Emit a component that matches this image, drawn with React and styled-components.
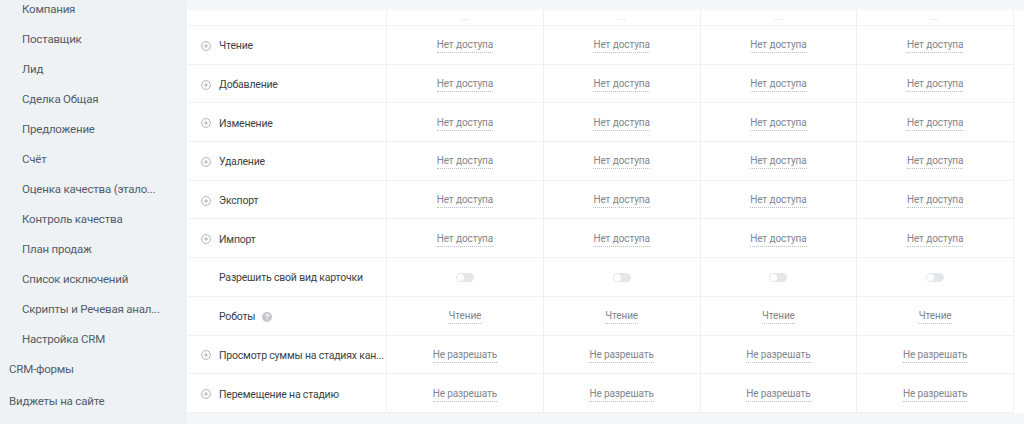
import React from 'react';
import styled, { createGlobalStyle } from 'styled-components';

const GlobalStyle = createGlobalStyle`
  html, body {
    margin: 0;
    padding: 0;
    background: #fff;
    font-family: Roboto, "Open Sans", "Liberation Sans", sans-serif;
  }
  #root {
    height: 424px;
    overflow: hidden;
  }
`;

const menu = [
  { name: 'Компания', sub: true },
  { name: 'Поставщик', sub: true },
  { name: 'Лид', sub: true },
  { name: 'Сделка Общая', sub: true },
  { name: 'Предложение', sub: true },
  { name: 'Счёт', sub: true },
  { name: 'Оценка качества (этало...', sub: true },
  { name: 'Контроль качества', sub: true },
  { name: 'План продаж', sub: true },
  { name: 'Список исключений', sub: true },
  { name: 'Скрипты и Речевая анал...', sub: true },
  { name: 'Настройка CRM', sub: true },
  { name: 'CRM-формы', sub: false },
  { name: 'Виджеты на сайте', sub: false, last: true },
];

const rows = [
  { label: 'Чтение', plus: true, kind: 'link', value: 'Нет доступа' },
  { label: 'Добавление', plus: true, kind: 'link', value: 'Нет доступа' },
  { label: 'Изменение', plus: true, kind: 'link', value: 'Нет доступа' },
  { label: 'Удаление', plus: true, kind: 'link', value: 'Нет доступа' },
  { label: 'Экспорт', plus: true, kind: 'link', value: 'Нет доступа' },
  { label: 'Импорт', plus: true, kind: 'link', value: 'Нет доступа' },
  { label: 'Разрешить свой вид карточки', plus: false, kind: 'toggle' },
  { label: 'Роботы', plus: false, kind: 'link', value: 'Чтение', help: true },
  { label: 'Просмотр суммы на стадиях кан...', plus: true, kind: 'link', value: 'Не разрешать' },
  { label: 'Перемещение на стадию', plus: true, kind: 'link', value: 'Не разрешать' },
];

const Page = styled.div`
  display: flex;
  height: 424px;
`;

const Sidebar = styled.nav`
  width: 187px;
  flex-shrink: 0;
  background: #eef2f4;
  display: flex;
  flex-direction: column;
  padding-top: 1px;
`;

const MenuItem = styled.div`
  height: 30px;
  line-height: 16px;
  padding-left: ${({ sub }) => (sub ? '22px' : '9px')};
  margin-top: ${({ last }) => (last ? '2px' : '0')};
  font-size: 11.5px;
  letter-spacing: -0.2px;
  color: #535c69;
  white-space: nowrap;
`;

const Main = styled.main`
  flex: 1;
  min-width: 0;
  background: #f5f7f8;
  padding-top: 10px;
  display: flex;
  flex-direction: column;
`;

const TableWrap = styled.div`
  background: #fff;
  padding-right: 10px;
  padding-left: 1px;
`;

const Table = styled.div`
  display: grid;
  grid-template-columns: 198px repeat(4, 1fr);
  border-right: 1px solid #eef0f2;
`;

const HeadCell = styled.div`
  height: 15px;
  border-bottom: 1px solid #eef0f2;
  border-left: ${({ first }) => (first ? 'none' : '1px solid #eef0f2')};
  display: flex;
  align-items: center;
  justify-content: center;
  font-size: 8px;
  letter-spacing: 1px;
  color: #b9bec4;
  line-height: 1;
`;

const LabelCell = styled.div`
  box-sizing: border-box;
  height: 38.7px;
  padding-top: 2px;
  border-bottom: 1px solid #eef0f2;
  display: flex;
  align-items: center;
  padding-left: ${({ plus }) => (plus ? '13px' : '31px')};
  gap: 8px;
  font-size: 10.5px;
  letter-spacing: -0.2px;
  color: #3b3f45;
  white-space: nowrap;
`;

const ValueCell = styled.div`
  box-sizing: border-box;
  height: 38.7px;
  padding-top: 2px;
  border-bottom: 1px solid #eef0f2;
  border-left: 1px solid #eef0f2;
  display: flex;
  align-items: center;
  justify-content: center;
`;

const Link = styled.span`
  font-size: 10px;
  letter-spacing: -0.1px;
  color: #80868e;
  border-bottom: 1px dotted #b8bec5;
  line-height: 13px;
  padding-bottom: 1px;
`;

const Toggle = styled.span`
  width: 18px;
  height: 9px;
  border-radius: 5px;
  background: #e4e6e9;
  position: relative;
  &::after {
    content: '';
    position: absolute;
    left: 1px;
    top: 1px;
    width: 7px;
    height: 7px;
    border-radius: 50%;
    background: #fff;
  }
`;

const HelpIcon = styled.span`
  width: 10px;
  height: 10px;
  border-radius: 50%;
  background: #c5c9ce;
  color: #fff;
  font-size: 8px;
  font-weight: 700;
  line-height: 10px;
  text-align: center;
  margin-left: -1px;
`;

const PlusIcon = () => (
  <svg width="10" height="10" viewBox="0 0 10 10" style={{ flexShrink: 0 }}>
    <circle cx="5" cy="5" r="4.4" fill="none" stroke="#a8adb3" strokeWidth="0.9" />
    <path d="M5 2.8v4.4M2.8 5h4.4" stroke="#a8adb3" strokeWidth="0.9" />
  </svg>
);

const Bottom = styled.div`
  flex: 1;
  background: #f5f7f8;
`;

const App = () => (
  <>
    <GlobalStyle />
    <Page>
      <Sidebar>
        {menu.map((m) => (
          <MenuItem key={m.name} sub={m.sub} last={m.last}>
            {m.name}
          </MenuItem>
        ))}
      </Sidebar>
      <Main>
        <TableWrap>
          <Table>
            <HeadCell first />
            {[0, 1, 2, 3].map((i) => (
              <HeadCell key={i}>...</HeadCell>
            ))}
            {rows.map((r) => (
              <React.Fragment key={r.label}>
                <LabelCell plus={r.plus}>
                  {r.plus && <PlusIcon />}
                  {r.label}
                  {r.help && <HelpIcon>?</HelpIcon>}
                </LabelCell>
                {[0, 1, 2, 3].map((i) => (
                  <ValueCell key={i}>
                    {r.kind === 'toggle' ? <Toggle /> : <Link>{r.value}</Link>}
                  </ValueCell>
                ))}
              </React.Fragment>
            ))}
          </Table>
        </TableWrap>
        <Bottom />
      </Main>
    </Page>
  </>
);

export default App;
